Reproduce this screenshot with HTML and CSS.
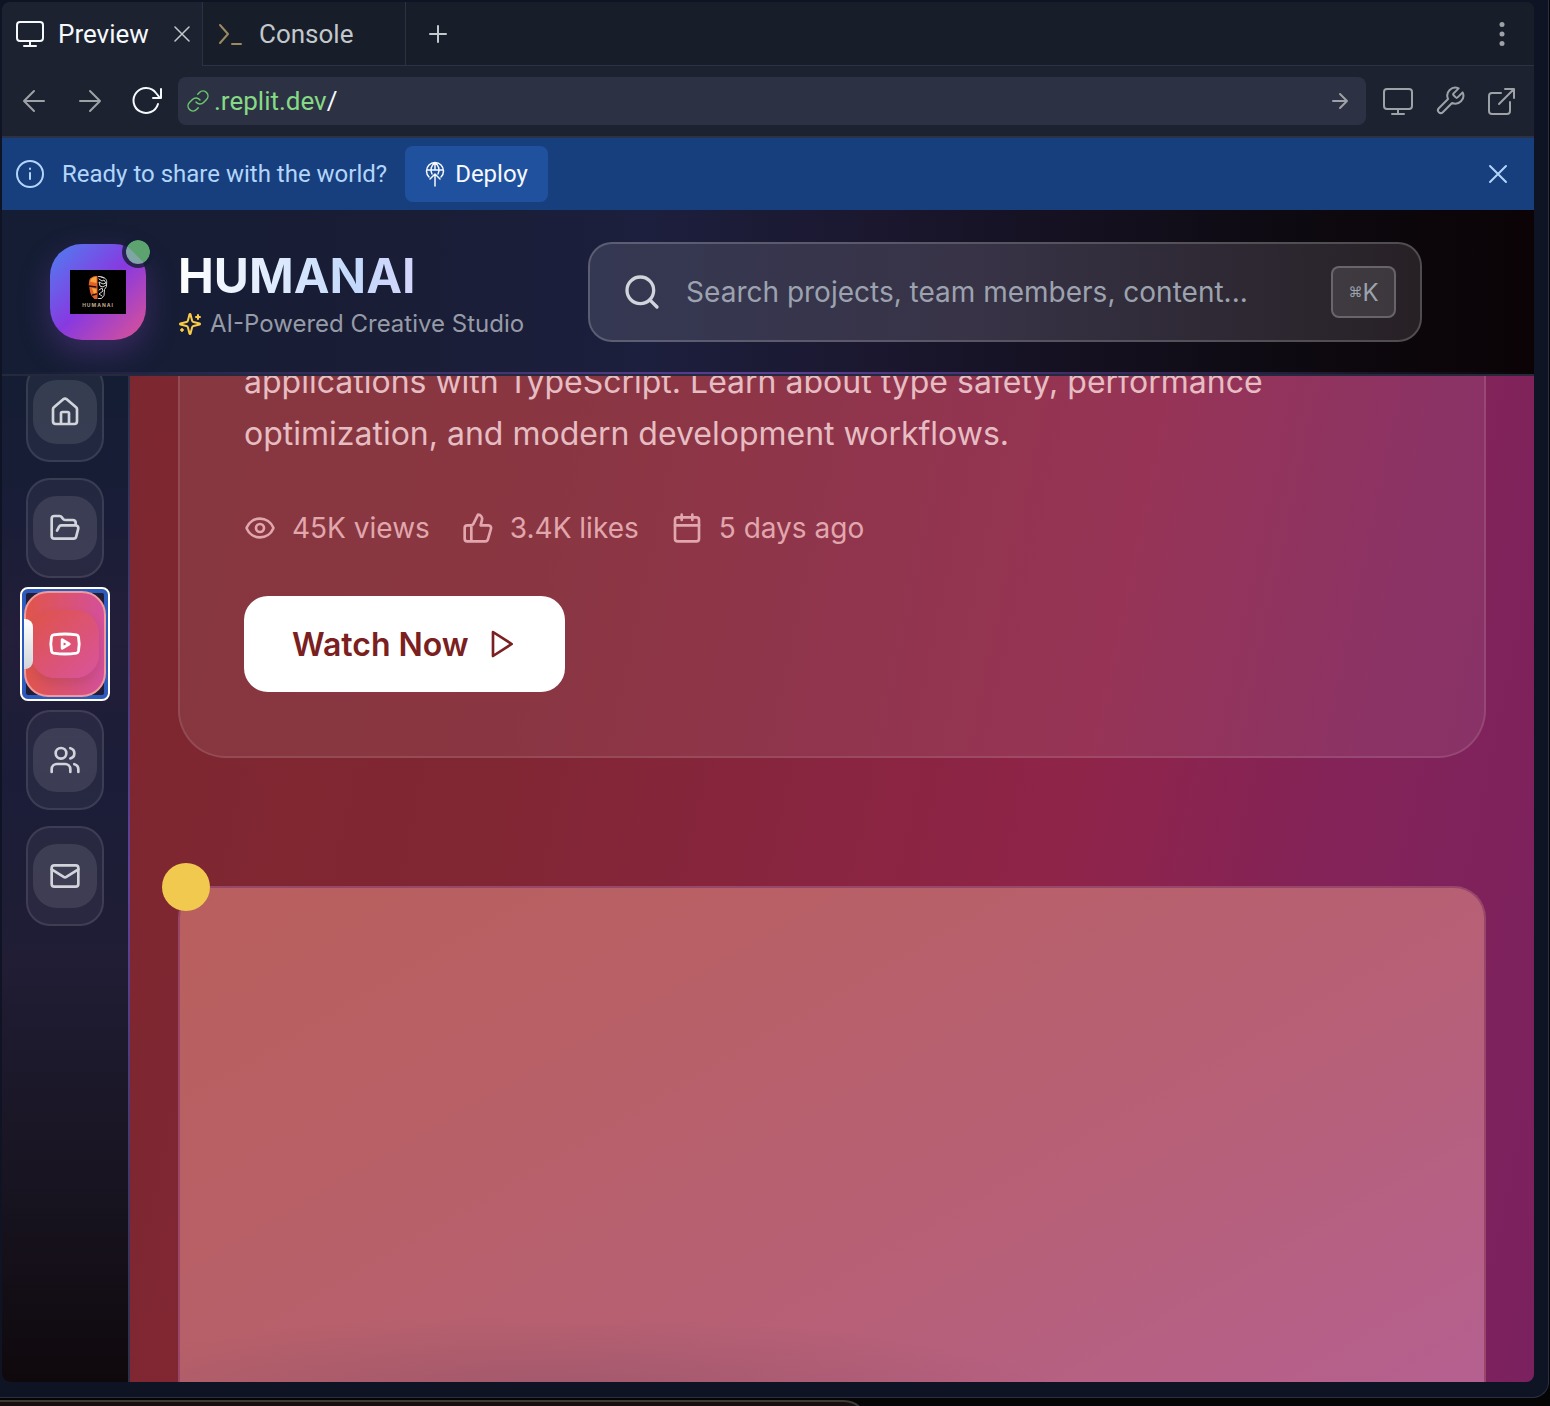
FILE: index.html
```html
<!DOCTYPE html>
<html lang="en">
<head>
<meta charset="utf-8">
<title>Preview</title>
<link rel="stylesheet" href="styles.css">
</head>
<body>
<div class="workspace">
  <div class="pane">
    <div class="tabs">
      <div class="tab tab-active">
        <svg width="28" height="28" viewBox="0 0 28 28"><rect x="1" y="2" width="26" height="19" rx="3"/><path d="M14 21v5M8 26h12"/></svg>
        <span class="tab-name">Preview</span>
        <button class="plain" aria-label="Close tab"><svg class="thin" width="16" height="16" viewBox="0 0 16 16"><path d="M1 1l14 14M15 1L1 15"/></svg></button>
      </div>
      <div class="tab tab-idle">
        <svg class="prompt" width="26" height="26" viewBox="0 0 26 26"><path d="M3 4l8 9-8 9M15 23h9"/></svg>
        <span class="tab-name">Console</span>
      </div>
      <div class="tab-rest">
        <button class="plain" aria-label="New tab"><svg width="20" height="20" viewBox="0 0 20 20"><path d="M10 2v16M2 10h16"/></svg></button>
        <button class="plain dots" aria-label="More"><svg width="24" height="28" viewBox="0 0 24 28"><circle cx="12" cy="4.500" r="2.500"/><circle cx="12" cy="14" r="2.500"/><circle cx="12" cy="23.500" r="2.500"/></svg></button>
      </div>
    </div>

    <div class="toolbar">
      <button class="plain nav-btn" aria-label="Back"><svg width="24" height="24" viewBox="0 0 24 24"><path d="M22 12H2M12 2L2 12l10 10"/></svg></button>
      <button class="plain nav-btn" aria-label="Forward"><svg width="24" height="24" viewBox="0 0 24 24"><path d="M2 12h20M12 2l10 10-10 10"/></svg></button>
      <button class="plain nav-btn reload" aria-label="Reload"><svg width="32" height="32" viewBox="0 0 32 32"><path d="M28 19a12.500 12.500 0 1 1-2-11l4 5M31 4v9h-8"/></svg></button>
      <div class="address">
        <svg class="link" width="24" height="24" viewBox="0 0 24 24"><path d="M10 13a5 5 0 0 0 7.540.54l3-3a5 5 0 0 0-7.070-7.070l-1.720 1.710M14 11a5 5 0 0 0-7.540-.54l-3 3a5 5 0 0 0 7.070 7.070l1.710-1.710"/></svg>
        <span class="url"><b>.replit.dev</b>/</span>
        <button class="plain" aria-label="Go"><svg width="18" height="18" viewBox="0 0 18 18"><path d="M2 9h14M9 2l7 7-7 7"/></svg></button>
      </div>
      <button class="plain tool-btn" aria-label="Device size"><svg width="30" height="28" viewBox="0 0 30 28"><rect x="1" y="2" width="28" height="20" rx="3"/><path d="M15 22v5M9 27h12"/></svg></button>
      <button class="plain tool-btn" aria-label="Developer tools"><svg width="32" height="32" viewBox="0 0 24 24"><path class="hair" d="M14.700 6.300a1 1 0 0 0 0 1.400l1.600 1.600a1 1 0 0 0 1.400 0l3.770-3.770a6 6 0 0 1-7.940 7.940l-6.910 6.910a2.120 2.120 0 0 1-3-3l6.910-6.910a6 6 0 0 1 7.940-7.940l-3.760 3.760z"/></svg></button>
      <button class="plain tool-btn" aria-label="Open in new tab"><svg width="28" height="28" viewBox="0 0 28 28"><path d="M13 6H4a3 3 0 0 0-3 3v15a3 3 0 0 0 3 3h15a3 3 0 0 0 3-3v-9M17 2h9v9M26 2L11 17"/></svg></button>
    </div>

    <div class="banner">
      <svg width="28" height="28" viewBox="0 0 28 28"><circle cx="14" cy="14" r="13"/><path d="M14 13v6M14 8.500v.5"/></svg>
      <span>Ready to share with the world?</span>
      <button class="deploy"><svg width="20" height="26" viewBox="0 0 20 26"><path d="M4 16a8.500 8.500 0 1 1 12 0M7 13c-2-4-1-9 3-11 4 2 5 7 3 11M10 2v7M2 9h16M10 25V13M5 18l5-5 5 5"/></svg>Deploy</button>
      <button class="plain dismiss" aria-label="Dismiss"><svg width="20" height="20" viewBox="0 0 20 20"><path d="M2 2l16 16M18 2L2 18"/></svg></button>
    </div>

    <div class="site">
      <header class="site-header">
        <div class="logo">
          <svg width="56" height="44" viewBox="0 0 56 44">
            <rect width="56" height="44" fill="#000"/>
            <path d="M27.500 6c-5 0-8 2-8.300 5l-.5 4 .6 2c.5 4 1 7 2.500 9l2.500 3h3.200z" fill="#e2602a"/>
            <path d="M26.500 7c-4 0-6 2-6.300 4.500L24 12.500l2.500.5zM22 18l4.500 1v6l-2.500-1z" fill="#f7a63c"/>
            <path d="M19 16l7 1M22.500 25l4-1" stroke="#2a0c05" stroke-width="1.300"/>
            <path d="M28.500 6.500c5 0 8 2 8.200 5l-.2 5-2 3-.5 6-2.500 3h-3M29 9l3 2 2-1 2 3-3 1-4-2 1 4 3 1 3-2M29 20l3-2 1 3-4 3 3 2M31 7l3 1" fill="none" stroke="#d8d8d8" stroke-width="1"/>
            <text x="28" y="37" text-anchor="middle">HUMANAI</text>
          </svg>
          <span class="status"></span>
        </div>
        <div class="brand">
          <h1>HUMANAI</h1>
          <p><svg width="24" height="24" viewBox="0 0 24 24"><path d="M9.937 15.500A2 2 0 0 0 8.500 14.063l-6.135-1.582a.5.5 0 0 1 0-.962L8.500 9.936A2 2 0 0 0 9.937 8.500l1.582-6.135a.5.5 0 0 1 .963 0L14.063 8.500A2 2 0 0 0 15.500 9.937l6.135 1.581a.5.5 0 0 1 0 .964L15.500 14.063a2 2 0 0 0-1.437 1.437l-1.582 6.135a.5.5 0 0 1-.963 0zM20 3v4M22 5h-4M4 17v2M5 18H3"/></svg>AI-Powered Creative Studio</p>
        </div>
        <label class="search">
          <svg width="40" height="40" viewBox="0 0 24 24"><circle cx="11" cy="11" r="8"/><path d="M21 21l-4.300-4.300"/></svg>
          <input type="text" aria-label="Search" placeholder="Search projects, team members, content...">
          <kbd><span>⌘</span>K</kbd>
        </label>
      </header>

      <div class="body">
        <nav class="rail">
          <a class="item" href="#" aria-label="Home"><span><svg viewBox="0 0 24 24"><path d="M15 21v-8a1 1 0 0 0-1-1h-4a1 1 0 0 0-1 1v8M3 10a2 2 0 0 1 .709-1.528l7-5.999a2 2 0 0 1 2.582 0l7 5.999A2 2 0 0 1 21 10v9a2 2 0 0 1-2 2H5a2 2 0 0 1-2-2z"/></svg></span></a>
          <a class="item" href="#" aria-label="Projects"><span><svg viewBox="0 0 24 24"><path d="M6 14l1.500-2.900A2 2 0 0 1 9.240 10H20a2 2 0 0 1 1.940 2.500l-1.540 6a2 2 0 0 1-1.950 1.500H4a2 2 0 0 1-2-2V5a2 2 0 0 1 2-2h3.900a2 2 0 0 1 1.690.9l.81 1.200a2 2 0 0 0 1.670.9H18a2 2 0 0 1 2 2v2"/></svg></span></a>
          <a class="item item-active" href="#" aria-label="Videos"><span><svg viewBox="0 0 24 24"><path d="M2.500 17a24.120 24.120 0 0 1 0-10 2 2 0 0 1 1.400-1.400 49.560 49.560 0 0 1 16.200 0A2 2 0 0 1 21.500 7a24.120 24.120 0 0 1 0 10 2 2 0 0 1-1.400 1.400 49.550 49.550 0 0 1-16.200 0A2 2 0 0 1 2.500 17M10 15l5-3-5-3z"/></svg></span></a>
          <a class="item" href="#" aria-label="Team"><span><svg viewBox="0 0 24 24"><path d="M16 21v-2a4 4 0 0 0-4-4H6a4 4 0 0 0-4 4v2M22 21v-2a4 4 0 0 0-3-3.870M16 3.130a4 4 0 0 1 0 7.750"/><circle cx="9" cy="7" r="4"/></svg></span></a>
          <a class="item" href="#" aria-label="Messages"><span><svg viewBox="0 0 24 24"><rect x="2" y="4" width="20" height="16" rx="2"/><path d="M22 7l-8.970 5.700a1.940 1.940 0 0 1-2.060 0L2 7"/></svg></span></a>
        </nav>
        <main class="content">
          <article class="feature">
            <p class="summary">applications with TypeScript. Learn about type safety, performance<br>optimization, and modern development workflows.</p>
            <ul class="stats">
              <li><svg viewBox="0 0 24 24"><path d="M2.062 12.348a1 1 0 0 1 0-.696 10.750 10.750 0 0 1 19.876 0 1 1 0 0 1 0 .696 10.750 10.750 0 0 1-19.876 0"/><circle cx="12" cy="12" r="3"/></svg>45K views</li>
              <li><svg viewBox="0 0 24 24"><path d="M7 10v12M15 5.880L14 10h5.830a2 2 0 0 1 1.920 2.560l-2.330 8A2 2 0 0 1 17.500 22H4a2 2 0 0 1-2-2v-8a2 2 0 0 1 2-2h2.760a2 2 0 0 0 1.790-1.110L12 2a3.130 3.130 0 0 1 3 3.880z"/></svg>3.4K likes</li>
              <li><svg viewBox="0 0 24 24"><path d="M8 2v4M16 2v4M3 10h18"/><rect x="3" y="4" width="18" height="18" rx="2"/></svg>5 days ago</li>
            </ul>
            <button class="watch">Watch Now<svg viewBox="0 0 24 24"><path d="M6 3l14 9-14 9z"/></svg></button>
          </article>
          <section class="stage"><i class="spot"></i></section>
        </main>
      </div>
    </div>
  </div>
</div>
<div class="under"><div class="under-window"></div></div>
</body>
</html>
```
FILE: styles.css
```css
* { box-sizing: border-box; }

body {
  margin: 0;
  height: 100vh;
  display: flex;
  flex-direction: column;
  overflow: hidden;
  background: #050506;
  font-family: Inter, "Liberation Sans", sans-serif;
}

svg {
  display: block;
  flex: none;
  fill: none;
  stroke: currentColor;
  stroke-width: 2;
  stroke-linecap: round;
  stroke-linejoin: round;
}

button { font: inherit; }

.plain {
  display: flex;
  align-items: center;
  justify-content: center;
  padding: 0;
  border: 0;
  background: none;
  color: inherit;
}

.workspace {
  flex: 1;
  min-height: 0;
  margin-right: 1px;
  padding: 2px 14px 15px 2px;
  display: flex;
  background: #0e1424;
  border: solid #2b3040;
  border-width: 0 1px 1px 0;
  border-radius: 0 0 16px 0;
}

.pane {
  flex: 1;
  min-width: 0;
  display: flex;
  flex-direction: column;
  overflow: hidden;
  border-radius: 8px;
  background: #1d2231;
  color: #9da2a6;
}

.tabs, .toolbar, .banner {
  font-family: Roboto, "Noto Sans", sans-serif;
}

.tabs {
  display: flex;
  height: 64px;
  font-size: 26px;
}

.tab {
  display: flex;
  align-items: center;
  padding: 0 12px 0 14px;
}

.tab-active {
  width: 200px;
  gap: 14px;
  color: #f5f9fc;
}

.tab-active .plain { margin-left: auto; color: #c2c8cc; }
.thin { stroke-width: 1.5; }

.tab-idle {
  width: 204px;
  gap: 16px;
  background: #181d2a;
  border: solid #2b3245;
  border-width: 0 1px 1px;
  color: #c2c8cc;
}

.prompt { color: #9a8b60; }

.tab-rest {
  flex: 1;
  display: flex;
  align-items: center;
  justify-content: space-between;
  padding: 0 20px 0 22px;
  background: #181d2a;
  border-bottom: 1px solid #2b3245;
  color: #c2c8cc;
}

.dots svg { fill: #9da2a6; stroke: none; }

.toolbar {
  display: flex;
  align-items: center;
  height: 72px;
  padding: 0 6px 0 4px;
  border-bottom: 2px solid #2b3245;
}

.nav-btn { width: 56px; height: 48px; }
.reload { color: #f5f9fc; }

.address {
  flex: 1;
  display: flex;
  align-items: center;
  gap: 4px;
  height: 48px;
  margin: 0 6px 0 4px;
  padding: 0 17px 0 8px;
  border-radius: 8px;
  background: #2c3144;
}

.link { color: #6cc96e; stroke-width: 1.5; }
.url { flex: 1; font-size: 26px; color: #f5f9fc; }
.url b { font-weight: 400; color: #86d985; }

.tool-btn { width: 52px; height: 48px; }
.hair { stroke-width: 1.5; }

.banner {
  display: flex;
  align-items: center;
  height: 72px;
  padding: 0 26px 0 14px;
  background: #183f7d;
  color: #b3d5fb;
  font-size: 24px;
}

.banner > span { margin: 0 18px; }

.deploy {
  display: flex;
  align-items: center;
  gap: 10px;
  height: 56px;
  padding: 0 20px;
  border: 0;
  border-radius: 8px;
  background: #20519f;
  color: #f5f9fc;
}

.deploy svg { stroke-width: 1.5; }
.dismiss { margin-left: auto; }

.site {
  flex: 1;
  min-height: 0;
  display: flex;
  flex-direction: column;
}

.site-header {
  position: relative;
  display: flex;
  align-items: center;
  padding: 32px 112px 32px 48px;
  border-bottom: 2px solid #242a3b;
  background: linear-gradient(90deg, #141d33, #191d35 25%, #1c1f3d 42%, #1b1831 55%, #120e1b 75%, #0c080d 88%, #0b0306);
}

.site-header::after {
  content: "";
  position: absolute;
  left: 0;
  right: 0;
  bottom: 0;
  height: 2px;
  background: linear-gradient(90deg, transparent, #5b3f96, transparent);
}

.logo {
  position: relative;
  display: flex;
  align-items: center;
  justify-content: center;
  width: 96px;
  height: 96px;
  border-radius: 32px;
  background: linear-gradient(135deg, #4d80f2, #8839e0 50%, #de5392);
  box-shadow: 0 12px 32px #a855f740;
}

.logo svg { stroke: none; }
.logo text { fill: #c4a88e; font: 700 5px Inter, sans-serif; letter-spacing: 1px; }

.status {
  position: absolute;
  top: -8px;
  right: -8px;
  width: 32px;
  height: 32px;
  border: 4px solid #151c35d0;
  border-radius: 50%;
  background: linear-gradient(45deg, #7fa5a5 38%, #5ca370 42%);
  background-clip: padding-box;
}

.brand { margin: 0 64px 0 32px; padding-top: 4px; }

.brand h1 {
  width: max-content;
  margin: 0;
  font-size: 48px;
  line-height: 60px;
  font-weight: 700;
  color: transparent;
  background: linear-gradient(90deg, #fff, #c3d9fb 75%, #d5d5fb);
  background-clip: text;
}

.brand p {
  display: flex;
  align-items: center;
  gap: 8px;
  margin: 0;
  font-size: 24px;
  line-height: 36px;
  color: #969ba7;
  white-space: nowrap;
}

.brand svg { color: #facc4a; }

.search {
  flex: 1;
  display: flex;
  align-items: center;
  height: 100px;
  padding: 0 24px 0 32px;
  border: 2px solid #ffffff48;
  border-radius: 24px;
  background: linear-gradient(90deg, #353853, #383347 45%, #272126);
  background-clip: padding-box;
  color: #d1d5db;
}

.search input {
  flex: 1;
  min-width: 0;
  margin: 0 24px;
  padding: 0;
  border: 0;
  outline: 0;
  background: none;
  font: 28px Inter, sans-serif;
  color: #e5e7eb;
}

.search input::placeholder { color: #9ca3af; opacity: 1; }

.search kbd {
  display: flex;
  align-items: center;
  justify-content: center;
  width: 65px;
  height: 52px;
  border: 2px solid #ffffff38;
  border-radius: 8px;
  background: #ffffff1a;
  font: 24px Inter, sans-serif;
  color: #9ca3af;
}

.search kbd span { font: 14px "DejaVu Sans", sans-serif; }

.body {
  flex: 1;
  min-height: 0;
  display: flex;
  overflow: hidden;
}

.rail {
  position: relative;
  z-index: 0;
  width: 128px;
  display: flex;
  flex-direction: column;
  align-items: center;
  gap: 16px;
  border-right: 2px solid #2c3048;
  background: linear-gradient(#141d33, #191d37 13%, #231e39 26%, #1b1d38 40%, #201d35 58%, #17131f 82%, #0f090d);
}

.rail::after {
  content: "";
  position: absolute;
  top: 0;
  bottom: 0;
  right: -2px;
  width: 2px;
  background: linear-gradient(transparent, #60449b, transparent);
}

.item {
  flex: none;
  display: flex;
  align-items: center;
  justify-content: center;
  width: 78px;
  height: 100px;
  border: 2px solid #ffffff1a;
  border-radius: 24px;
  background: #ffffff0d;
  color: #d1d5db;
}

.item:first-child { margin-top: -14px; }

.item span {
  display: flex;
  align-items: center;
  justify-content: center;
  width: 64px;
  height: 64px;
  border-radius: 24px;
  background: #ffffff1a;
}

.item svg { width: 32px; height: 32px; }

.item-active {
  position: relative;
  width: 82px;
  height: 106px;
  margin: -3px 0;
  border-color: #f09a9c;
  background: linear-gradient(90deg, #e0554b, #d4509a);
  color: #fff;
}

.item-active span {
  width: 68px;
  height: 68px;
  background: linear-gradient(135deg, #df5347, #d9549d);
  box-shadow: 0 6px 12px #0000001a;
}

.item-active svg { width: 34px; height: 34px; }

/* keyboard focus ring */
.item-active::before {
  content: "";
  position: absolute;
  z-index: -1;
  inset: -6px;
  border: 2px solid #fff;
  border-radius: 8px;
  box-shadow: inset 0 0 0 4px #2c5bbd;
}

.item-active::after {
  content: "";
  position: absolute;
  left: -2px;
  top: 26px;
  width: 9px;
  height: 50px;
  border-radius: 0 8px 8px 0;
  background: linear-gradient(#fff, #d1d5db);
}

.content {
  flex: 1;
  min-width: 0;
  display: flex;
  flex-direction: column;
  padding: 0 48px;
  background: linear-gradient(102deg, #7d2730, #812633 28%, #86253c 42%, #8f2449 64%, #832359 81%, #7b215f);
}

.feature {
  margin: -86px 0 128px;
  padding: 64px;
  border: 2px solid #ffffff2b;
  border-radius: 48px;
  background: #ffffff13;
  background-clip: padding-box;
}

.summary {
  margin: 0 0 48px;
  font-size: 32px;
  line-height: 52px;
  color: #e6bdc2;
}

.stats {
  display: flex;
  gap: 32px;
  margin: 0 0 48px;
  padding: 0;
  list-style: none;
  font-size: 28px;
  line-height: 40px;
  color: #e2a6ad;
}

.stats li { display: flex; align-items: center; gap: 16px; }
.stats svg { width: 32px; height: 32px; }

.watch {
  display: flex;
  align-items: center;
  gap: 16px;
  height: 96px;
  padding: 0 48px;
  border: 0;
  border-radius: 24px;
  background: #fff;
  font-size: 32px;
  font-weight: 600;
  color: #7a2020;
}

.watch svg { width: 32px; height: 32px; }

.stage {
  position: relative;
  flex: 1;
  border: 2px solid #98466a;
  border-bottom: 0;
  border-radius: 32px 32px 0 0;
  background:
    radial-gradient(ellipse 520px 80px at 28% 103%, #8a4f6380, transparent),
    linear-gradient(150deg, #b95f5e, #b86066 30%, #b76077 65%, #b56090);
}

.spot {
  position: absolute;
  top: -25px;
  left: -18px;
  width: 48px;
  height: 48px;
  border-radius: 50%;
  background: #f1c94e;
}

.under {
  height: 8px;
  overflow: hidden;
  padding-top: 2px;
}

.under-window {
  width: 56%;
  height: 40px;
  border: 2px solid #3d3a37;
  border-left: 0;
  border-radius: 0 24px 0 0;
  background: #16110f;
}
```
